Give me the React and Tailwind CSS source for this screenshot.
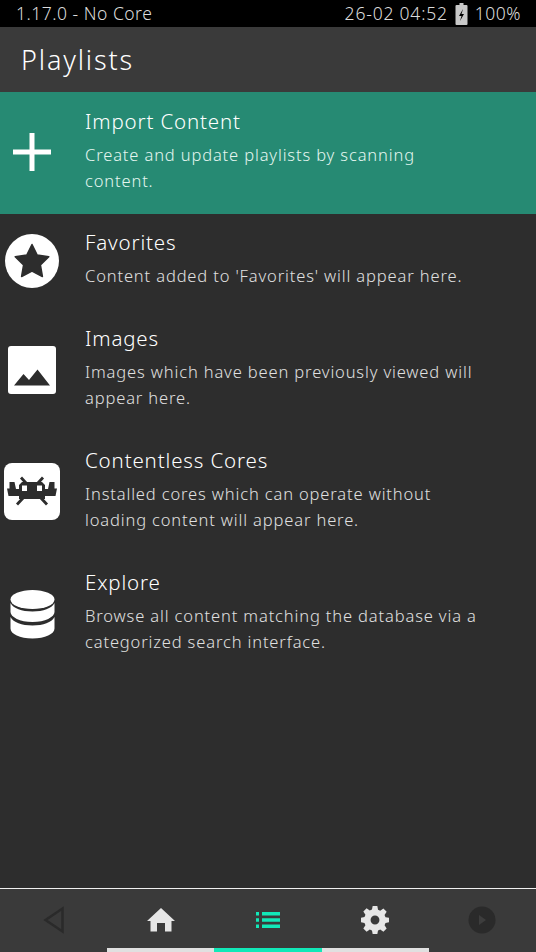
import React from "react";

function Row({ title, lines, icon, active }) {
  return (
    <div className={`flex items-stretch ${active ? "pt-[17px] pb-[20px] bg-[#268a73]" : "pt-[16px] pb-[21px]"}`}>
      <div className="w-[85px] shrink-0 relative">{icon}</div>
      <div className="flex flex-col min-w-0">
        <div className="h-[26px] leading-[25px] text-[20.5px] font-light tracking-[0.85px] whitespace-nowrap text-white">{title}</div>
        <div className={`mt-[7px] text-[16.500px] font-light leading-[26px] tracking-[0.86px] ${active ? "text-[#e4f6f0]" : "text-[#e0e0e0]"}`}>
          {lines.map((l) => (
            <div key={l} className="whitespace-nowrap">{l}</div>
          ))}
        </div>
      </div>
    </div>
  );
}

function Plus() {
  return (
    <svg className="absolute left-[13px] top-[24px]" width="38" height="38" viewBox="0 0 38 38">
      <path d="M16.5 0h5v16.5H38v5H21.500V38h-5V21.500H0v-5h16.500z" fill="#fff" />
    </svg>
  );
}
function Star() {
  return (
    <svg className="absolute left-[5px] top-[4px]" width="54" height="54" viewBox="0 0 54 54">
      <circle cx="27" cy="27" r="27" fill="#fff" />
      <path d="M27 10.500l5.200 10.600 11.600 1.600-8.400 8.200 2 11.600L27 37.100l-10.400 5.400 2-11.600-8.400-8.200 11.600-1.600z" fill="#2d2d2d" stroke="#2d2d2d" strokeWidth="1.500" strokeLinejoin="round" />
    </svg>
  );
}
function Image() {
  return (
    <svg className="absolute left-[8px] top-[20px]" width="48" height="48" viewBox="0 0 48 48">
      <rect width="48" height="48" rx="3" fill="#fff" />
      <path d="M6 39.500L15.500 28l5.500 6 8.500-10.500L42 39.500z" fill="#2d2d2d" />
    </svg>
  );
}
function Core() {
  return (
    <svg className="absolute left-[4px] top-[15px]" width="56" height="57" viewBox="0 0 56 57">
      <rect width="56" height="57" rx="8" fill="#fff" />
      <path
        fillRule="evenodd"
        fill="#2d2d2d"
        d="M18 19H38L41 22V26H44L45.500 19H50.500V25.500H53L51.500 33H41V36H15V33H4.500L3 25.500H5.500V19H10.500L12 26H15V22Z M18 22.500h5v5.500h-5z M33 22.500h5v5.500h-5z"
      />
      <path d="M17 14.500L22 20M39 14.500L34 20M20 34L13 41.500M36 34L43 41.500" stroke="#2d2d2d" strokeWidth="2.800" fill="none" />
    </svg>
  );
}
function Db() {
  return (
    <svg className="absolute left-[10px] top-[20px]" width="45" height="49" viewBox="0 0 45 49">
      <ellipse cx="22.500" cy="9.500" rx="22" ry="9.500" fill="#fff" />
      <path d="M0.500 13c3 5.500 11 8.500 22 8.500s19-3 22-8.500v9c0 5-9.500 10-22 10s-22-5-22-10z" fill="#fff" />
      <path d="M0.500 27c3 5.500 11 8.500 22 8.500s19-3 22-8.500v11.500c0 5.500-9.500 10-22 10s-22-4.500-22-10z" fill="#fff" />
    </svg>
  );
}

export default function App() {
  return (
    <div className="w-[536px] h-[952px] flex flex-col bg-[#2d2d2d] overflow-hidden" style={{ fontFamily: '"Noto Sans", sans-serif' }}>
      <div className="h-[27px] bg-black flex items-center justify-between pl-[16px] pr-[15px] text-[17.5px] font-light text-[#dcdcdc] tracking-[0.5px]">
        <span>1.17.0 - No Core</span>
        <span className="flex items-center">
          <span className="tracking-[0.8px]">26-02 04:52</span>
          <svg className="mx-[7px]" width="13" height="24" viewBox="0 0 12 24">
            <path fillRule="evenodd" fill="#c8c8c8" d="M4 1h4v2h3a1 1 0 0 1 1 1v18a1 1 0 0 1-1 1H1a1 1 0 0 1-1-1V4a1 1 0 0 1 1-1h3z M7.500 7L3.500 14h2.500l-1.500 5 4-7H6z" />
          </svg>
          <span>100%</span>
        </span>
      </div>
      <div className="h-[65px] bg-[#3a3a3a] flex items-center pl-[21px] pt-[2px] text-[27px] font-light tracking-[1.85px] text-white">Playlists</div>
      <div className="flex-1 flex flex-col">
        <Row active title="Import Content" lines={["Create and update playlists by scanning", "content."]} icon={<Plus />} />
        <Row title="Favorites" lines={["Content added to 'Favorites' will appear here."]} icon={<Star />} />
        <Row title="Images" lines={["Images which have been previously viewed will", "appear here."]} icon={<Image />} />
        <Row title="Contentless Cores" lines={["Installed cores which can operate without", "loading content will appear here."]} icon={<Core />} />
        <Row title="Explore" lines={["Browse all content matching the database via a", "categorized search interface."]} icon={<Db />} />
      </div>
      <div className="h-[64px] bg-[#3a3a3a] border-t border-[#f0f0f0] relative flex flex-col">
        <div className="flex-1 grid grid-cols-5 pb-[2px]">
          <div className="flex items-center justify-center">
            <svg width="22" height="28" viewBox="0 0 22 28"><path d="M19.500 2.500v23L2.500 14z" fill="none" stroke="#2a2a2a" strokeWidth="2.500" /></svg>
          </div>
          <div className="flex items-center justify-center">
            <svg width="28" height="24" viewBox="0 0 28 24"><path d="M14 0l14 13h-3.500v10.500h-6.500V15h-8v8.500H3.500V13H0z" fill="#e6e6e6" /></svg>
          </div>
          <div className="flex items-center justify-center">
            <svg width="24" height="16" viewBox="0 0 24 16"><path d="M0 0h3v3.500H0zM6 0h18v3.500H6zM0 6.200h3v3.500H0zM6 6.200h18v3.500H6zM0 12.500h3V16H0zM6 12.500h18V16H6z" fill="#12e8b8" /></svg>
          </div>
          <div className="flex items-center justify-center">
            <svg width="28" height="28" viewBox="0 0 24 24"><path fill="#e6e6e6" fillRule="evenodd" d="M10 0h4l.6 3.200 1.900.8 2.700-1.800 2.800 2.800L20.200 7.700l.8 1.900L24 10v4l-3 .6-.8 1.900 1.800 2.700-2.800 2.800-2.700-1.800-1.900.8L14 24h-4l-.6-3-1.900-.8-2.700 1.800L2 19.200l1.800-2.700-.8-1.900L0 14v-4l3-.6.8-1.900L2 4.800 4.800 2l2.700 1.800 1.900-.8z M12 8.200a3.800 3.800 0 1 0 0 7.600 3.800 3.800 0 0 0 0-7.600z" /></svg>
          </div>
          <div className="flex items-center justify-center">
            <svg width="28" height="28" viewBox="0 0 28 28"><circle cx="14" cy="14" r="13.500" fill="#2a2a2a" /><path d="M11 9l7 5-7 5z" fill="#3d3d3d" /></svg>
          </div>
        </div>
        <div className="absolute bottom-0 left-[107px] w-[322px] h-[4px] bg-[#e0e0e0] flex justify-center">
          <div className="w-[108px] bg-[#12e8b8]" />
        </div>
      </div>
    </div>
  );
}
